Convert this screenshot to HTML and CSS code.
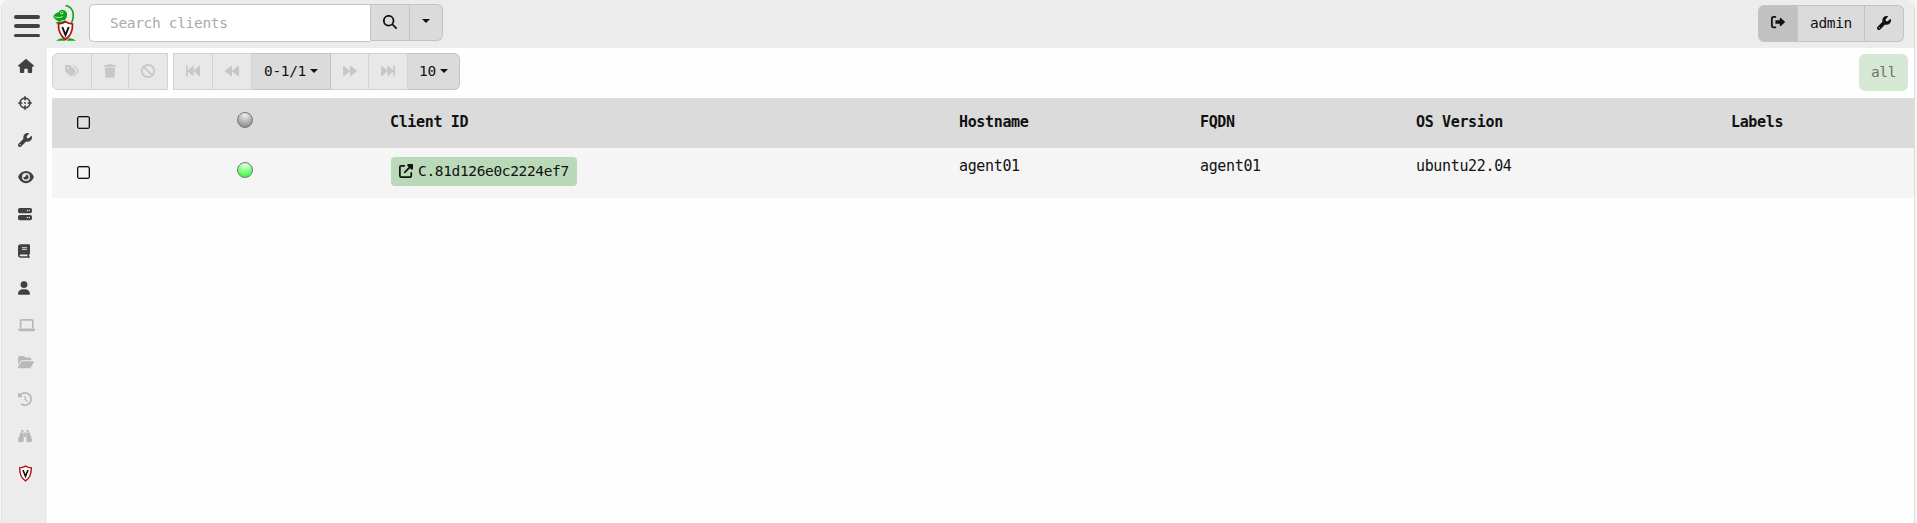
FILE: index.html
```html
<!DOCTYPE html>
<html lang="en">
<head>
<meta charset="utf-8">
<title>Clients</title>
<link rel="stylesheet" href="styles.css">
</head>
<body>
<svg class="sprite" aria-hidden="true">
  <symbol id="house" viewBox="0 0 576 512"><path d="M575.8 255.5c0 18-15 32.1-32 32.1h-32l.7 160.2c0 2.7-.2 5.4-.5 8.1V472c0 22.1-17.9 40-40 40H392c-22.1 0-40-17.9-40-40V384c0-17.700-14.300-32-32-32H256c-17.700 0-32 14.300-32 32v88c0 22.100-17.900 40-40 40H104c-22.100 0-40-17.900-40-40V287.600H32c-18 0-32-14-32-32.100c0-9 3-17 10-24L266.400 8c7-7 15-8 22-8s15 2 21 7L564.800 231.500c8 7 12 15 11 24z"/></symbol>
  <symbol id="target" viewBox="0 0 512 512"><path fill="none" stroke="currentColor" stroke-width="60" stroke-linecap="round" d="M256 76a180 180 0 1 0 0 360a180 180 0 1 0 0-360M256 30v110M256 372v110M30 256h110M372 256h110"/><circle cx="256" cy="256" r="34"/></symbol>
  <symbol id="wrench" viewBox="0 0 512 512"><path fill-rule="evenodd" d="M352 320c88.400 0 160-71.600 160-160c0-15.300-2.200-30.100-6.200-44.200c-3.100-10.800-16.400-13.200-24.300-5.300l-76.800 76.800c-3 3-7.100 4.700-11.300 4.700H336c-8.800 0-16-7.200-16-16V118.600c0-4.200 1.700-8.300 4.700-11.300l76.800-76.800c7.900-7.900 5.400-21.200-5.300-24.300C382.100 2.200 367.300 0 352 0C263.600 0 192 71.600 192 160c0 19.100 3.400 37.500 9.500 54.500L19.900 396.100C7.200 408.800 0 426.100 0 444.100C0 481.600 30.400 512 67.900 512c18 0 35.300-7.200 48-19.900L297.500 310.500c17 6.200 35.400 9.500 54.500 9.500zM80 408a24 24 0 1 1 0 48 24 24 0 1 1 0-48z"/></symbol>
  <symbol id="eye" viewBox="0 0 576 512"><path fill-rule="evenodd" d="M288 32c-80.800 0-145.500 36.800-192.600 80.600C48.600 156 17.300 208 2.500 243.700c-3.300 7.900-3.300 16.700 0 24.600C17.300 304 48.600 356 95.400 399.400C142.500 443.200 207.200 480 288 480s145.500-36.800 192.600-80.600c46.800-43.500 78.100-95.400 93-131.100c3.300-7.900 3.300-16.700 0-24.600c-14.900-35.700-46.200-87.700-93-131.100C433.500 68.800 368.800 32 288 32zM144 256a144 144 0 1 1 288 0 144 144 0 1 1 -288 0zm144-64c0 35.300-28.700 64-64 64c-7.100 0-13.900-1.200-20.300-3.300c-5.500-1.800-11.900 1.600-11.700 7.400c.3 6.900 1.300 13.800 3.200 20.700c13.700 51.200 66.400 81.600 117.600 67.900s81.600-66.400 67.900-117.600c-11.100-41.500-47.800-69.400-88.600-71.100c-5.800-.2-9.200 6.100-7.400 11.700c2.100 6.400 3.300 13.200 3.300 20.300z"/></symbol>
  <symbol id="server" viewBox="0 0 512 512"><path fill-rule="evenodd" d="M64 32h384a64 64 0 0 1 64 64v64a64 64 0 0 1-64 64H64a64 64 0 0 1-64-64V96a64 64 0 0 1 64-64zm280 72a24 24 0 1 0 0 48 24 24 0 1 0 0-48zm72 0a24 24 0 1 0 0 48 24 24 0 1 0 0-48zM64 288h384a64 64 0 0 1 64 64v64a64 64 0 0 1-64 64H64a64 64 0 0 1-64-64v-64a64 64 0 0 1 64-64zm280 72a24 24 0 1 0 0 48 24 24 0 1 0 0-48zm72 0a24 24 0 1 0 0 48 24 24 0 1 0 0-48z"/></symbol>
  <symbol id="book" viewBox="0 0 448 512"><path fill-rule="evenodd" d="M96 0C43 0 0 43 0 96v320c0 53 43 96 96 96h320a32 32 0 0 0 0-64v-64a32 32 0 0 0 32-32V32a32 32 0 0 0-32-32H96zm0 384h256v64H96a32 32 0 0 1 0-64zm48-272h192v32H144zm0 64h192v32H144z"/></symbol>
  <symbol id="user" viewBox="0 0 448 512"><path d="M224 256A128 128 0 1 0 224 0a128 128 0 1 0 0 256zm-45.700 48C79.800 304 0 383.800 0 482.300C0 498.700 13.300 512 29.700 512H418.300c16.400 0 29.700-13.300 29.700-29.700C448 383.800 368.200 304 269.700 304H178.300z"/></symbol>
  <symbol id="laptop" viewBox="0 0 640 512"><path d="M128 32C92.700 32 64 60.700 64 96V352h64V96H512V352h64V96c0-35.300-28.700-64-64-64H128zM19.200 384C8.600 384 0 392.600 0 403.200C0 445.600 34.400 480 76.800 480H563.200c42.400 0 76.800-34.400 76.800-76.800c0-10.600-8.600-19.200-19.200-19.200H19.200z"/></symbol>
  <symbol id="folder" viewBox="0 0 576 512"><path d="M88.700 223.800L0 375.800V96C0 60.700 28.700 32 64 32H181.500c17 0 33.300 6.700 45.300 18.700l26.500 26.500c12 12 28.300 18.700 45.300 18.700H416c35.300 0 64 28.700 64 64v32H144c-22.800 0-43.800 12.100-55.300 31.800zm27.600 16.100C122.100 230 132.600 224 144 224H544c11.500 0 22 6.100 27.700 16.100s5.700 22.200-.1 32.100l-112 192C453.900 474 443.400 480 432 480H32c-11.500 0-22-6.100-27.700-16.100s-5.700-22.200 .1-32.100l112-192z"/></symbol>
  <symbol id="history" viewBox="0 0 512 512"><path d="M75 75L41 41C25.900 25.900 0 36.600 0 57.900V168c0 13.300 10.700 24 24 24H134.100c21.400 0 32.100-25.900 17-41l-30.800-30.800C155 85.500 203 64 256 64c106 0 192 86 192 192s-86 192-192 192c-40.800 0-78.600-12.700-109.700-34.400c-14.500-10.100-34.400-6.600-44.600 7.900s-6.600 34.400 7.900 44.600C151.200 495 201.700 512 256 512c141.400 0 256-114.600 256-256S397.400 0 256 0C185.300 0 121.300 28.700 75 75zm181 53c-13.300 0-24 10.700-24 24V256c0 6.400 2.500 12.500 7 17l72 72c9.400 9.400 24.600 9.400 33.900 0s9.400-24.600 0-33.900l-65-65V152c0-13.300-10.700-24-24-24z"/></symbol>
  <symbol id="binoculars" viewBox="0 0 512 512"><path d="M128 32h64a16 16 0 0 1 16 16v48H112V48a16 16 0 0 1 16-16zm192 0h64a16 16 0 0 1 16 16v48h-96V48a16 16 0 0 1 16-16zM105 128h103v288a64 64 0 0 1-64 64H64a64 64 0 0 1-64-64v-10c0-75 56-130 70-250c2-16 16-28 35-28zm199 0h103c19 0 33 12 35 28c14 120 70 175 70 250v10a64 64 0 0 1-64 64h-80a64 64 0 0 1-64-64zM224 128h64v160h-64z"/></symbol>
  <symbol id="tags" viewBox="0 0 512 512"><path fill-rule="evenodd" d="M0 80v149.500c0 17 6.700 33.300 18.700 45.300l150 150c25 25 65.500 25 90.500 0l115-115c25-25 25-65.500 0-90.500l-168-168A64 64 0 0 0 161 32H48A48 48 0 0 0 0 80zm112 32a32 32 0 1 1 0 64 32 32 0 1 1 0-64z"/><path fill="none" stroke="currentColor" stroke-width="46" stroke-linecap="round" d="M315 60l145 141a62 62 0 0 1 0 88L320 430"/></symbol>
  <symbol id="trash" viewBox="0 0 448 512"><path d="M135.200 17.700L128 32H32a32 32 0 0 0 0 64h384a32 32 0 0 0 0-64h-96l-7.200-14.300A32 32 0 0 0 284.200 0H163.800a32 32 0 0 0-28.600 17.700zM416 128H32l21.200 339a48 48 0 0 0 47.900 45h245.800a48 48 0 0 0 47.900-45z"/></symbol>
  <symbol id="ban" viewBox="0 0 512 512"><path fill="none" stroke="currentColor" stroke-width="62" d="M256 32a224 224 0 1 0 0 448a224 224 0 1 0 0-448M98 98l316 316"/></symbol>
  <symbol id="fast-back" viewBox="0 0 512 512"><path stroke="currentColor" stroke-width="38" stroke-linejoin="round" d="M19 75h26v362H19zM70 256L258 84v344zM300 256L490 84v344z"/></symbol>
  <symbol id="back" viewBox="0 0 512 512"><path stroke="currentColor" stroke-width="42" stroke-linejoin="round" d="M24 256L232 86v340zM274 256L488 86v340z"/></symbol>
  <symbol id="search" viewBox="0 0 512 512"><path fill-rule="evenodd" d="M416 208c0 45.900-14.900 88.300-40 122.700L502.600 457.400c12.500 12.500 12.500 32.800 0 45.300s-32.800 12.500-45.300 0L330.700 376c-34.400 25.200-76.800 40-122.700 40C93.100 416 0 322.900 0 208S93.100 0 208 0S416 93.100 416 208zM208 352a144 144 0 1 0 0-288 144 144 0 1 0 0 288z"/></symbol>
  <symbol id="external" viewBox="0 0 512 512"><path fill="none" stroke="currentColor" stroke-width="64" stroke-linecap="round" stroke-linejoin="round" d="M192 64H80a48 48 0 0 0-48 48v320a48 48 0 0 0 48 48h320a48 48 0 0 0 48-48V320M210 302L440 72"/><path d="M320 0h160a32 32 0 0 1 32 32v160l-54 22L298 54z"/></symbol>
  <symbol id="signout" viewBox="0 0 512 512"><path fill="none" stroke="currentColor" stroke-width="64" stroke-linecap="round" d="M160 64H96a64 64 0 0 0-64 64v256a64 64 0 0 0 64 64h64"/><path d="M192 192h128v-64c0-28 24-38 42-22l138 128c16 14 16 30 0 44L362 406c-18 16-42 6-42-22v-64H192a32 32 0 0 1-32-32v-64a32 32 0 0 1 32-32z"/></symbol>
  <symbol id="shield" viewBox="0 0 16 18"><path fill="#fff" stroke="#b80b10" stroke-width="1.500" d="M8 1.200Q11 3 14.200 3C14.300 9 12.800 14 8 16.800C3.200 14 1.700 9 1.800 3Q5 3 8 1.200z"/><path fill="none" stroke="#111" stroke-width="1.700" d="M5.300 5.200L8 12L10.700 5.200"/></symbol>
</svg>
<div class="app">
  <header class="topbar">
    <button class="menu" aria-label="Menu"><i></i><i></i><i></i></button>
    <svg class="logo" viewBox="0 0 24 38">
      <path fill="none" stroke="#0aa514" stroke-width="1.600" d="M12.500 1.500C20.500 3 22 11 18.500 19"/>
      <path fill="#0aa514" d="M.3 12Q2 9 6 8Q7 5 10.500 6Q14.500 7 14 11.500Q13.500 16 9 17.500Q4 18 .5 13.500zM2.500 18.500l2 1.500 6-1 3-2-3-1zM3 36.800q3-2.800 7-2.500l2.500 2.500zM23 36.800q-3-2.800-7-2.500l-2.500 2.500z"/>
      <path stroke="#ececec" stroke-width=".8" fill="none" d="M1.500 13Q6.500 14.500 10 12.500"/>
      <circle cx="8.800" cy="8.700" r="1.500" fill="#fff"/><circle cx="8.800" cy="8.700" r=".7" fill="#111"/>
      <path fill="#fff" stroke="#b80b10" stroke-width="1.700" d="M12.500 17.800Q15.500 19.700 19.500 20C19.800 27 17.500 32 12.500 35.500C7.500 32 5.200 27 5.500 20Q9.500 19.700 12.500 17.800z"/>
      <path fill="none" stroke="#111" stroke-width="2" d="M9.300 23L12.500 31L15.700 23"/>
    </svg>
    <div class="searchbox">
      <input class="search" type="text" placeholder="Search clients">
      <button class="btn find"><svg class="icon"><use href="#search"/></svg></button>
      <button class="btn more"><span class="caret"></span></button>
    </div>
    <div class="group account">
      <button class="btn logout"><svg class="icon"><use href="#signout"/></svg></button>
      <button class="btn name">admin</button>
      <button class="btn tool"><svg class="icon"><use href="#wrench"/></svg></button>
    </div>
  </header>
  <div class="body">
    <nav class="sidebar">
      <a><svg class="icon w16"><use href="#house"/></svg></a>
      <a><svg class="icon"><use href="#target"/></svg></a>
      <a><svg class="icon"><use href="#wrench"/></svg></a>
      <a><svg class="icon w16"><use href="#eye"/></svg></a>
      <a><svg class="icon"><use href="#server"/></svg></a>
      <a><svg class="icon w12"><use href="#book"/></svg></a>
      <a><svg class="icon w12"><use href="#user"/></svg></a>
      <a class="off"><svg class="icon w17"><use href="#laptop"/></svg></a>
      <a class="off"><svg class="icon w16"><use href="#folder"/></svg></a>
      <a class="off"><svg class="icon"><use href="#history"/></svg></a>
      <a class="off"><svg class="icon"><use href="#binoculars"/></svg></a>
      <a class="home"><svg class="badge"><use href="#shield"/></svg></a>
    </nav>
    <main class="content">
      <div class="toolbar">
        <div class="group actions">
          <button class="btn disabled"><svg class="icon"><use href="#tags"/></svg></button>
          <button class="btn disabled"><svg class="icon w12"><use href="#trash"/></svg></button>
          <button class="btn disabled"><svg class="icon"><use href="#ban"/></svg></button>
        </div>
        <div class="group pager">
          <button class="btn disabled"><svg class="icon"><use href="#fast-back"/></svg></button>
          <button class="btn disabled"><svg class="icon"><use href="#back"/></svg></button>
          <button class="btn range">0-1/1<span class="caret"></span></button>
          <button class="btn disabled"><svg class="icon flip"><use href="#back"/></svg></button>
          <button class="btn disabled"><svg class="icon flip"><use href="#fast-back"/></svg></button>
          <button class="btn size">10<span class="caret"></span></button>
        </div>
        <button class="all">all</button>
      </div>
      <div class="row head">
        <span class="check"><i class="box"></i></span>
        <span class="state"><i class="dot"></i></span>
        <span>Client ID</span><span>Hostname</span><span>FQDN</span><span>OS Version</span><span>Labels</span>
      </div>
      <div class="row">
        <span class="check"><i class="box"></i></span>
        <span class="state"><i class="dot online"></i></span>
        <span><a class="client"><svg class="icon"><use href="#external"/></svg>C.81d126e0c2224ef7</a></span>
        <span>agent01</span><span>agent01</span><span>ubuntu22.04</span><span></span>
      </div>
    </main>
  </div>
</div>
</body>
</html>
```
FILE: styles.css
```css
* { box-sizing: border-box; }
body { margin: 0; height: 523px; overflow: hidden; background: #f5f5f5; color: #111; font: 14.5px/20px "DejaVu Sans Mono", monospace; letter-spacing: -.33px; }
button, input { margin: 0; padding: 0; font: inherit; letter-spacing: inherit; color: inherit; }
svg { display: block; flex: none; }
.sprite { position: absolute; width: 0; height: 0; }
.app { display: flex; flex-direction: column; height: 523px; margin: 0 2px 0 1px; border-left: 1px solid #dfdfdf; border-right: 1px solid #dedede; border-radius: 9px 9px 0 0; overflow: hidden; background: #fefefe; }
.topbar { display: flex; align-items: flex-start; flex: none; height: 48px; padding: 4px 10px 0 12px; background: #ececec; }
.menu { display: flex; flex-direction: column; justify-content: space-between; width: 26px; height: 22px; margin: 11px 13px 0 0; border: 0; background: none; }
.menu i { display: block; width: 26px; height: 3.5px; border-radius: 2px; background: #414141; }
.logo { width: 24px; height: 38px; }
.searchbox { display: flex; margin-left: 12px; }
.search { width: 281px; height: 38px; padding: 0 0 0 20px; border: 1px solid #c3c3c3; border-right: 0; border-radius: 5px 0 0 5px; background: #fff; outline: 0; }
.search::placeholder { color: #aaa; opacity: 1; }
.btn { display: flex; align-items: center; justify-content: center; width: 39px; height: 37px; border: 1px solid #c3c3c3; border-left-width: 0; background: #dbdbdb; }
.icon { width: 14px; height: 14px; fill: currentColor; }
.w12 { width: 12px; }
.w16 { width: 16px; }
.w17 { width: 17.5px; }
.flip { transform: scaleX(-1); }
.find { border-left-width: 1px; width: 40px; padding-bottom: 2px; }
.more { width: 33px; border-radius: 0 6px 6px 0; padding-bottom: 4px; }
.caret { width: 0; border: 4px solid transparent; border-top-color: currentColor; border-bottom: 0; }
.group { display: flex; }
.group .btn:first-child { border-left-width: 1px; }
.account { margin: 1px 0 0 auto; }
.account .btn:first-child, .actions .btn:first-child { border-radius: 6px 0 0 6px; }
.account .btn:last-child, .pager .btn:last-child { border-radius: 0 6px 6px 0; }
.logout { width: 40px; background: #c1c1c1; padding-bottom: 4px; }
.name { width: 67px; padding-bottom: 1px; }
.tool { padding-bottom: 2px; }
.body { display: flex; flex: 1; }
.sidebar { width: 45px; background: #ececec; color: #414141; }
.sidebar a { display: flex; align-items: center; height: 37px; padding: 0 0 2px 16px; }
.sidebar .home { padding-bottom: 0; }
.sidebar .off { color: #b8b8b8; }
.badge { width: 15px; height: 17px; }
.content { flex: 1; padding: 5px 0 0 5px; }
.toolbar { display: flex; height: 45px; }
.actions { margin-right: 5px; }
.actions .btn:first-child { width: 40px; }
.actions .btn:nth-child(2) { width: 37px; }
.pager .btn:first-child { width: 40px; }
.btn.disabled { background: #e8e8e8; border-color: #d2d2d2; color: #c7c7c7; padding-bottom: 1px; }
.pager .btn.disabled:nth-child(4) { width: 38px; }
.btn.range { width: 79px; }
.btn.size { width: 52px; }
.range .caret, .size .caret { margin: 0 0 1px 4px; }
.range, .size { padding-bottom: 1px; }
.all { width: 49px; height: 37px; margin: 1px 6px 0 auto; padding-bottom: 1px; border: 0; border-radius: 6px; background: #d5e8d4; color: #707070; }
.row { display: grid; grid-template-columns: 185px 153px 569px 241px 216px 315px 1fr; height: 50px; padding-top: 8px; background: #f5f5f5; font-size: 15px; letter-spacing: -.35px; }
.head { padding-top: 14px; background: #dbdbdb; font-weight: bold; }
.check { padding: 10px 0 0 25px; }
.head .check { padding-top: 4px; }
.box { display: block; width: 13px; height: 13px; border: 1px solid #111; border-radius: 2px; box-shadow: inset 0 0 0 .5px #555; }
.head .box { background: #e0e0e0; }
.state { padding-top: 6px; }
.head .state { padding-top: 0; }
.dot { display: block; width: 16px; height: 16px; border: 1px solid #777; border-radius: 50%; background: radial-gradient(circle at 50% 15%, #eee, #bbb 45%, #858585 90%); }
.dot.online { background: radial-gradient(circle at 50% 15%, #eaffea, #8bff8b 45%, #33f733 90%); }
.client { display: flex; align-items: center; width: 186px; height: 29px; margin: 1px 0 0 1px; padding: 0 0 1px 8px; gap: 5px; border-radius: 4px; background: #b9d9b8; font-size: 14.5px; }
```
